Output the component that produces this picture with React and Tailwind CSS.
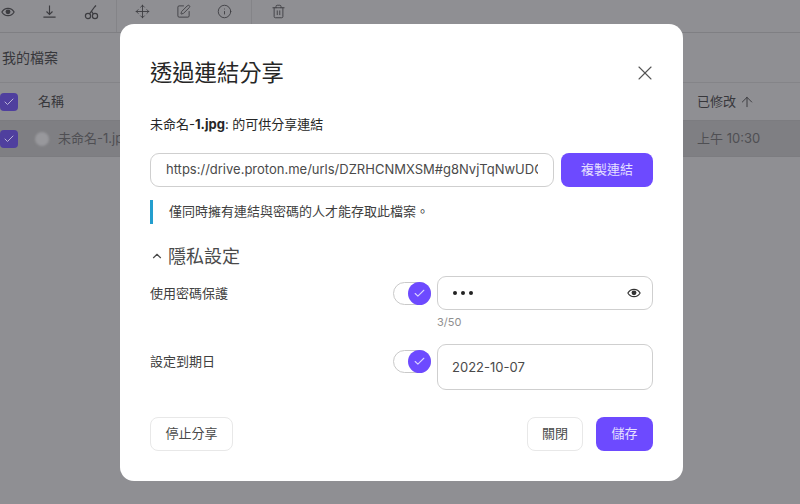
import { ChevronUp, X, ArrowUp, Move, SquarePen, Info, Trash2, Check } from 'lucide-react';

const FONT = "font-['Inter','Noto_Sans_CJK_TC',sans-serif]";

function EyeIcon({ size = 14 }) {
  return (
    <svg width={size} height={size} viewBox="0 0 16 16" fill="none">
      <path d="M1 8c1.6-2.8 4-4.2 7-4.2s5.4 1.4 7 4.2c-1.6 2.8-4 4.2-7 4.2S2.600 10.800 1 8z" stroke="currentColor" strokeWidth="1.3" />
      <circle cx="8" cy="7.800" r="2.800" fill="currentColor" />
    </svg>
  );
}

// arrow over a bare line, no tray sides
function DownloadLine() {
  return (
    <svg width="15" height="15" viewBox="0 0 16 16" fill="none" stroke="currentColor" strokeWidth="1.2">
      <path d="M8 1.500v9.500M4.800 8l3.200 3.200L11.200 8M1.500 14h13" />
    </svg>
  );
}

// two rings with a diagonal handle
function LinkRings() {
  return (
    <svg width="16" height="16" viewBox="0 0 16 16" fill="none" stroke="currentColor" strokeWidth="1.2">
      <circle cx="4" cy="12" r="2.600" />
      <circle cx="11" cy="12" r="2.600" />
      <path d="M5.500 9.800 10.500 3M9 9.600 7.400 7M10.500 3l1.500-1.500" />
    </svg>
  );
}

function RowCheck() {
  return (
    <span className="flex h-[18px] w-[18px] items-center justify-center rounded-[4px] bg-[#4f3f9e] text-[#b9b4d6]">
      <Check size={12} strokeWidth={2} />
    </span>
  );
}

function Toggle() {
  return (
    <span className="flex h-[23px] w-[38px] shrink-0 items-center justify-end rounded-full border border-[#c9c9c9] bg-white">
      <span className="-mr-px flex h-[23px] w-[23px] items-center justify-center rounded-full bg-[#6d4aff] text-[#d9d2ff]">
        <Check size={13} strokeWidth={2} />
      </span>
    </span>
  );
}

function Toolbar() {
  return (
    <div className="flex h-[33px] border-b border-[#7f7f83] text-[#3c3c40]">
      <div className="flex items-center gap-[27px] pb-[9px] pl-px pr-[16px]">
        <EyeIcon />
        <DownloadLine />
        <LinkRings />
      </div>
      <div className="flex items-center gap-[26px] border-l border-[#848488] pb-[9px] pl-[18px] pr-[19px]">
        <Move size={15} strokeWidth={1.4} />
        <SquarePen size={15} strokeWidth={1.4} />
        <Info size={15} strokeWidth={1.4} />
      </div>
      <div className="flex items-center border-l border-[#848488] pb-[9px] pl-[19px]">
        <Trash2 size={15} strokeWidth={1.4} />
      </div>
    </div>
  );
}

function FileList() {
  return (
    <div className="h-full bg-[#8f8f93] text-[13px] text-[#37373b]">
      <Toolbar />
      <div className="flex h-[50px] items-center border-b border-[#848488] pl-[2px] text-[14px]">我的檔案</div>
      <div className="flex h-[37px] items-center">
        <RowCheck />
        <span className="ml-[20px] flex-1">名稱</span>
        <span className="flex w-[103px] items-center gap-[3px]">
          已修改
          <ArrowUp size={16} strokeWidth={1.4} />
        </span>
      </div>
      <div className="flex h-[37px] items-center border-y border-[#7c7c80] bg-[#7f7f83]">
        <RowCheck />
        <span className="ml-[17px] h-[14px] w-[14px] rounded-full bg-[#98989c] blur-[1px]" />
        <span className="ml-[9px] flex-1 text-[#4f4f53]">未命名-1.jpg</span>
        <span className="w-[103px] text-[#4f4f53]">上午 10:30</span>
      </div>
    </div>
  );
}

export default function App() {
  return (
    <div className={`relative h-[504px] w-[800px] overflow-hidden ${FONT}`}>
      <FileList />

      <div className="absolute inset-0 pl-[120px] pt-[24px]">
        <div className="flex h-[457px] w-[563px] flex-col rounded-[14px] bg-white px-[30px] text-[#262626]">
          <div className="mt-[34px] flex h-[30px] items-center justify-between">
            <h1 className="text-[22.3px] font-normal leading-[30px]">透過連結分享</h1>
            <X size={24} strokeWidth={1.1} className="-mr-[4px] text-[#555]" />
          </div>

          <p className="mt-[27px] text-[13px] leading-[18px]">
            未命名-<b>1.jpg</b>: 的可供分享連結
          </p>

          <div className="mt-[20px] flex gap-[7px]">
            <div className="flex h-[34px] w-[404px] items-center rounded-[9px] border border-[#cfcfcf] px-[15px] text-[13px] text-[#4a4a4a]">
              <span className="overflow-hidden whitespace-nowrap">
                https://drive.proton.me/urls/DZRHCNMXSM#g8NvjTqNwUDC
              </span>
            </div>
            <button type="button" className="h-[34px] w-[92px] rounded-[8px] bg-[#6d4aff] text-[13px] text-[#e6e0ff]">
              複製連結
            </button>
          </div>

          <div className="mt-[13px] flex h-[24px] items-center border-l-[3px] border-[#239ece] pl-[16px] text-[13px] text-[#404040]">
            僅同時擁有連結與密碼的人才能存取此檔案。
          </div>

          <div className="mt-[19px] flex h-[26px] items-center gap-[4px] text-[18px] text-[#4a4a4a]">
            <ChevronUp size={14} strokeWidth={2} />
            隱私設定
          </div>

          <div className="mt-[7px] flex items-start">
            <span className="mt-[8px] flex-1 text-[13px] leading-[18px] text-[#404040]">使用密碼保護</span>
            <div className="mr-[6px] mt-[6px]"><Toggle /></div>
            <div className="w-[216px]">
              <div className="flex h-[34px] items-center justify-between rounded-[9px] border border-[#cfcfcf] pl-[15px] pr-[11px] text-[#333]">
                <span className="flex gap-[4px]">
                  <i className="h-[4px] w-[4px] rounded-full bg-[#222]" />
                  <i className="h-[4px] w-[4px] rounded-full bg-[#222]" />
                  <i className="h-[4px] w-[4px] rounded-full bg-[#222]" />
                </span>
                <EyeIcon />
              </div>
              <div className="mt-[5px] text-[11px] leading-[14px] text-[#8f8f8f]">3/50</div>
            </div>
          </div>

          <div className="mt-[15px] flex items-start">
            <span className="mt-[8px] flex-1 text-[13px] leading-[18px] text-[#404040]">設定到期日</span>
            <div className="mr-[6px] mt-[6px]"><Toggle /></div>
            <div className="flex h-[46px] w-[216px] items-center rounded-[9px] border border-[#cfcfcf] pl-[14px] pt-[1px] text-[13px] text-[#4a4a4a]">
              2022-10-07
            </div>
          </div>

          <div className="mt-[27px] flex items-center">
            <button type="button" className="h-[34px] w-[83px] rounded-[8px] border border-[#e8e8e8] text-[13px] text-[#4a4a4a]">
              停止分享
            </button>
            <button type="button" className="ml-auto h-[34px] w-[56px] rounded-[8px] border border-[#e8e8e8] text-[13px] text-[#4a4a4a]">
              關閉
            </button>
            <button type="button" className="ml-[13px] h-[34px] w-[57px] rounded-[8px] bg-[#6d4aff] text-[13px] text-[#e6e0ff]">
              儲存
            </button>
          </div>
        </div>
      </div>
    </div>
  );
}
